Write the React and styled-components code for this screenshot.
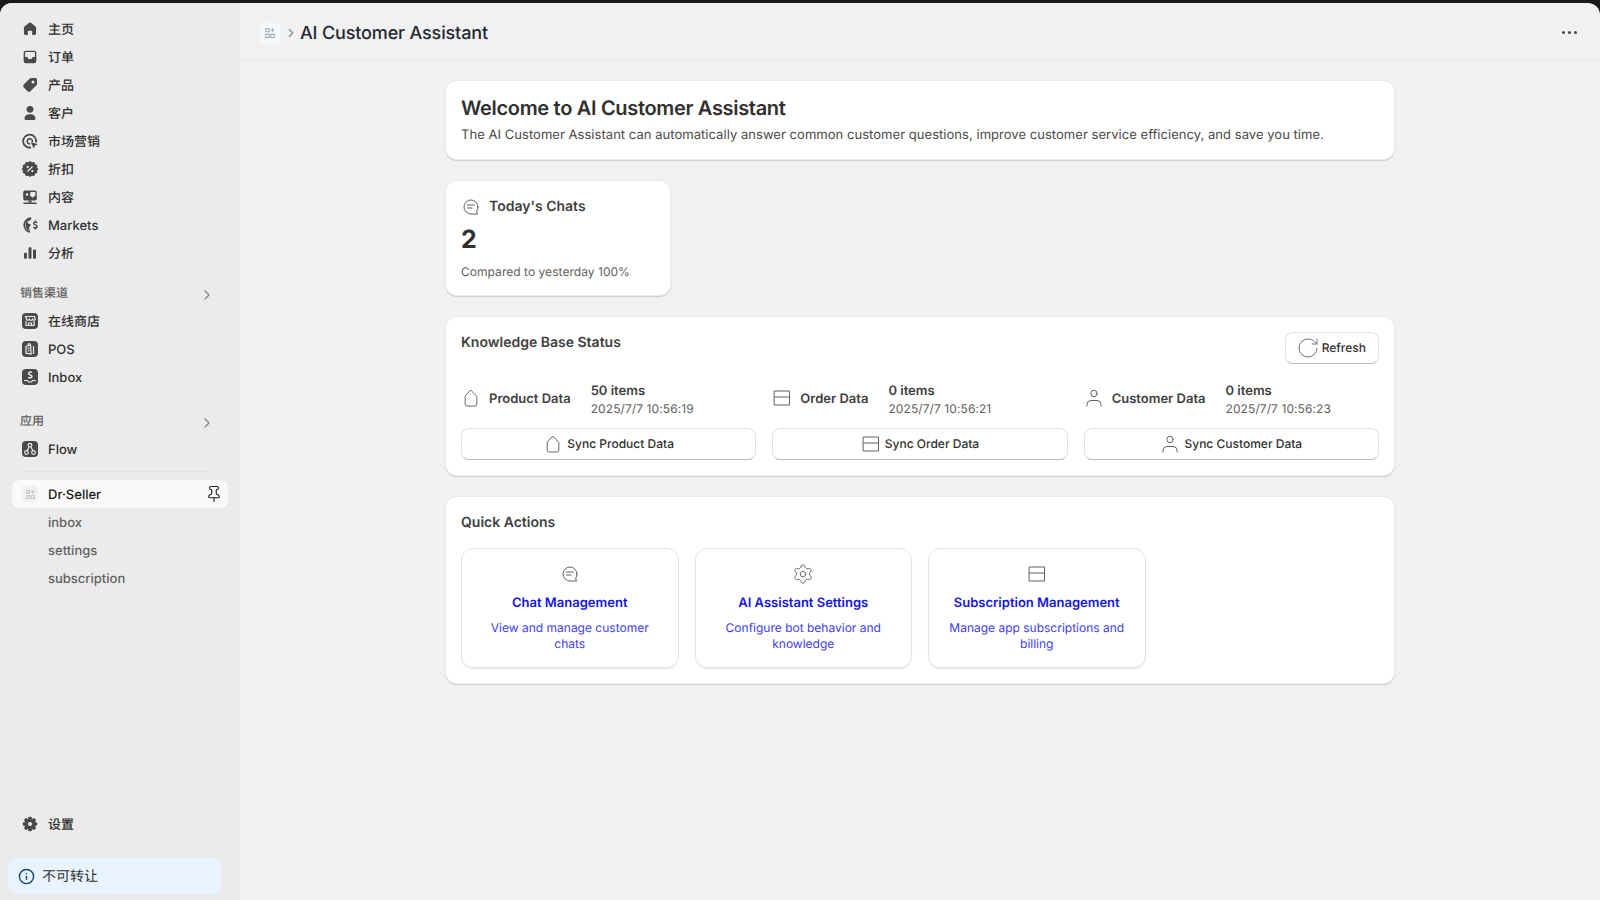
import React from 'react'
import styled, { createGlobalStyle } from 'styled-components'
import { ChevronRight, Pin, RotateCw, Settings as GearOutline, Info } from 'lucide-react'

const GlobalStyle = createGlobalStyle`
  html, body, #root {
    margin: 0;
    height: 100%;
    overflow: hidden;
  }
  body {
    font-family: Inter, "Noto Sans CJK SC", sans-serif;
    font-size: 13px;
    color: #303030;
    background: #1a1a1a;
    text-rendering: geometricPrecision;
  }
  * { box-sizing: border-box; }
`

const Shell = styled.div`
  height: 100vh;
  padding-top: 3px;
  background: #1a1a1a;
`
const Frame = styled.div`
  height: 897px;
  display: grid;
  grid-template-columns: 240px 1fr;
  border-radius: 12px 12px 0 0;
  overflow: hidden;
  background: #f1f1f1;
`
const Sidebar = styled.aside`
  display: flex;
  flex-direction: column;
  background: #ebebeb;
`
const Nav = styled.nav`
  flex: 1;
  padding: 12px 12px 0;
  display: flex;
  flex-direction: column;
`
const NavRow = styled.div`
  height: 28px;
  flex: none;
  display: flex;
  align-items: center;
  gap: 8px;
  padding: 0 8px;
  border-radius: 8px;
  font-size: 13px;
  font-weight: ${p => (p.$active ? 550 : 450)};
  color: ${p => (p.$active ? '#1a1a1a' : '#303030')};
  background: ${p => (p.$active ? '#fafafa' : 'transparent')};
  svg { flex: none; }
`
const NavLabel = styled.span`
  margin-top: ${p => (p.$cjk ? -1 : 2)}px;
`
const SubRow = styled.div`
  height: 28px;
  flex: none;
  display: flex;
  align-items: center;
  padding: 2px 0 0 36px;
  font-size: 13px;
  font-weight: 450;
  color: #616161;
`
const SectionRow = styled.div`
  height: 28px;
  flex: none;
  margin-top: ${p => p.$gap}px;
  display: flex;
  align-items: center;
  justify-content: space-between;
  padding: 0 13px 0 8px;
  font-size: 12px;
  font-weight: 550;
  color: #616161;
  span { margin-top: -1px; }
  svg { margin-top: 4px; }
`
const Divider = styled.div`
  height: 1px;
  flex: none;
  margin: 8px 19px 8px 8px;
  background: #e1e1e1;
`
const PinSlot = styled.span`
  margin-left: auto;
  margin-right: -3px;
  display: flex;
  color: #1f1f1f;
`
const SettingsRow = styled(NavRow)`
  margin-top: auto;
`
const Notice = styled.div`
  height: 36px;
  flex: none;
  margin: 20px 19px 6px 8px;
  padding: 0 10px;
  display: flex;
  align-items: center;
  gap: 7px;
  border-radius: 8px;
  background: #e8f3fd;
  font-size: 14px;
  color: #303030;
  svg { color: #0b4a6f; flex: none; }
`
const Main = styled.main`
  display: flex;
  flex-direction: column;
  min-width: 0;
`
const TopBar = styled.header`
  height: 57px;
  flex: none;
  display: flex;
  align-items: center;
  padding: 3px 20px 0;
  border-bottom: 1px solid #e8e8e8;
`
const AppTile = styled.span`
  width: ${p => p.$size}px;
  height: ${p => p.$size}px;
  margin: ${p => (20 - p.$size) / 2}px;
  flex: none;
  display: flex;
  align-items: center;
  justify-content: center;
  border-radius: 4px;
  background: ${p => p.$bg};
`
const TitleChevron = styled.span`
  display: flex;
  margin: 0 2px 0 4px;
  color: #8a8a8a;
`
const PageTitle = styled.h1`
  margin: 2px 0 0;
  font-size: 18px;
  font-weight: 550;
  letter-spacing: -0.15px;
  color: #1f2933;
`
const MoreDots = styled.div`
  margin-left: auto;
  margin-right: 3px;
  display: flex;
  gap: 2.6px;
  i {
    width: 3.4px;
    height: 3.4px;
    border-radius: 50%;
    background: #4a4a4a;
  }
`
const Content = styled.div`
  width: 950px;
  margin: 20px auto 0;
  display: flex;
  flex-direction: column;
  gap: 20px;
`
const Card = styled.section`
  background: #fff;
  border-radius: 12px;
  padding: 16px;
  box-shadow: inset 0 0 0 1px rgba(0, 0, 0, 0.08), 0 1px 1px rgba(0, 0, 0, 0.16);
`
const WelcomeCard = styled(Card)`
  padding-bottom: 15px;
`
const WelcomeTitle = styled.h2`
  margin: 0;
  font-size: 20px;
  line-height: 24px;
  font-weight: 600;
  letter-spacing: -0.32px;
  color: #303030;
`
const WelcomeText = styled.p`
  margin: 5px 0 0;
  font-size: 13px;
  line-height: 20px;
  letter-spacing: 0.04px;
  color: #4a4a4a;
`
const StatCard = styled(Card)`
  width: 226px;
  height: 116px;
  padding-top: 16.5px;
`
const StatHead = styled.div`
  display: flex;
  align-items: center;
  gap: 8px;
  font-size: 14px;
  line-height: 20px;
  font-weight: 600;
  color: #404040;
`
const StatNumber = styled.div`
  margin-top: 5px;
  font-size: 25px;
  line-height: 36px;
  font-weight: 700;
  color: #303030;
`
const StatNote = styled.div`
  margin-top: 4px;
  font-size: 12px;
  line-height: 20px;
  letter-spacing: 0.04px;
  color: #616161;
`
const CardHead = styled.div`
  display: flex;
  justify-content: space-between;
  align-items: flex-start;
`
const CardTitle = styled.h3`
  margin: 0;
  padding-top: 1px;
  font-size: 14px;
  line-height: 19px;
  font-weight: 600;
  color: #404040;
`
const BaseButton = styled.button`
  height: 32px;
  display: flex;
  align-items: center;
  justify-content: center;
  gap: 4px;
  padding: 0 12px;
  background: #fff;
  border: 1px solid #e3e3e3;
  border-bottom-color: #bdbdbd;
  border-radius: 8px;
  font-family: inherit;
  font-size: 12px;
  font-weight: 500;
  color: #303030;
  text-rendering: inherit;
  svg { flex: none; }
`
const ButtonLabel = styled.span`
  margin-top: -2px;
`
const RefreshGlyph = styled(RotateCw)`
  margin: 0 -2px;
`
const SourceGrid = styled.div`
  margin-top: 16px;
  display: grid;
  grid-template-columns: repeat(3, 1fr);
  column-gap: 16px;
`
const SourceColumn = styled.div`
  display: flex;
  flex-direction: column;
  gap: 12px;
`
const SourceInfo = styled.div`
  height: 36px;
  display: flex;
  align-items: center;
  gap: 8px;
  font-size: 13px;
  font-weight: 600;
  color: #404040;
`
const SourceLabel = styled.span`
  margin-top: 2px;
`
const SourceMeta = styled.div`
  margin: 3px 0 0 12px;
  font-size: 13px;
  font-weight: 600;
  line-height: 17px;
  small {
    display: block;
    font-size: 12px;
    font-weight: 400;
    letter-spacing: 0.09px;
    color: #616161;
  }
`
const ActionGrid = styled.div`
  margin-top: 16px;
  display: grid;
  grid-template-columns: repeat(4, 1fr);
  gap: 16px;
`
const ActionTile = styled.a`
  height: 120px;
  padding: 15px 16px;
  display: flex;
  flex-direction: column;
  align-items: center;
  text-align: center;
  border-radius: 12px;
  border: 1px solid #e3e3e3;
  box-shadow: 0 1px 1px rgba(0, 0, 0, 0.1);
`
const ActionIcon = styled.span`
  height: 20px;
  display: flex;
  align-items: center;
  justify-content: center;
`
const ActionTitle = styled.div`
  margin-top: 9px;
  font-size: 13px;
  line-height: 20px;
  font-weight: 600;
  color: #1414e6;
`
const ActionText = styled.div`
  margin-top: 7px;
  font-size: 12px;
  line-height: 16px;
  color: #4040f0;
`

const dark = '#4a4a4a'

const Ico = ({ children, pad = 0 }) => (
  <svg width="20" height="20" viewBox={`${-pad} ${-pad} ${20 + 2 * pad} ${20 + 2 * pad}`} fill={dark} fillRule="evenodd">{children}</svg>
)

const HomeIcon = () => (
  <Ico pad={1.5}><path d="M11 2.9a1.6 1.6 0 0 0-2 0L3.6 7a1.6 1.6 0 0 0-.6 1.3v7A1.7 1.7 0 0 0 4.7 17h2.8v-4a1 1 0 0 1 1-1h3a1 1 0 0 1 1 1v4h2.8a1.7 1.7 0 0 0 1.7-1.7v-7a1.6 1.6 0 0 0-.6-1.3z" /></Ico>
)
const InboxIcon = () => (
  <Ico pad={1}><path d="M5.5 3h9A2.5 2.5 0 0 1 17 5.5v9a2.5 2.5 0 0 1-2.5 2.5h-9A2.5 2.5 0 0 1 3 14.5v-9A2.5 2.5 0 0 1 5.5 3zM4.6 5.5V10h2.6l1 2.2h3.6l1-2.2h2.6V5.5a.9.9 0 0 0-.9-.9h-9a.9.9 0 0 0-.9.9z" /></Ico>
)
const TagIcon = () => (
  <Ico><path d="M11.2 3h4.3A1.5 1.5 0 0 1 17 4.5v4.3a2 2 0 0 1-.6 1.4l-6 6a2 2 0 0 1-2.8 0l-3.8-3.8a2 2 0 0 1 0-2.8l6-6a2 2 0 0 1 1.4-.6zM13 5.5a1.5 1.5 0 1 0 0 3 1.5 1.5 0 0 0 0-3z" /></Ico>
)
const PersonIcon = () => (
  <Ico>
    <circle cx="10" cy="6.3" r="3.4" />
    <path d="M4.5 15.5c0-2.8 2.4-4.3 5.5-4.3s5.5 1.5 5.5 4.3a1.5 1.5 0 0 1-1.5 1.5H6a1.5 1.5 0 0 1-1.5-1.5z" />
  </Ico>
)
const TargetIcon = () => (
  <Ico>
    <path fill="none" stroke={dark} strokeWidth="1.8" d="M16 11.5a6.5 6.5 0 1 0-5 5" />
    <path fill="none" stroke={dark} strokeWidth="1.6" d="M12.3 11a2.6 2.6 0 1 0-2 1.8" />
    <path d="M10.8 11l7 2.3-2.8 1.2-1.2 2.9z" />
  </Ico>
)
const DiscountIcon = () => (
  <Ico>
    <path d="M10 2l1.9 1.3 2.3-.2 1 2.1 2.1 1-.2 2.3L18.4 10l-1.3 1.5.2 2.3-2.1 1-1 2.1-2.3-.2L10 18l-1.9-1.3-2.3.2-1-2.1-2.1-1 .2-2.3L1.6 10l1.3-1.5-.2-2.3 2.1-1 1-2.1 2.3.2z" />
    <path fill="none" stroke="#ebebeb" strokeWidth="1.3" d="M12.5 7.5l-5 5" />
    <circle cx="7.7" cy="7.9" r="1.1" fill="#ebebeb" />
    <circle cx="12.3" cy="12.1" r="1.1" fill="#ebebeb" />
  </Ico>
)
const ContentIcon = () => (
  <Ico>
    <path d="M5 3.5h10a1.8 1.8 0 0 1 1.8 1.8v6.4a1.8 1.8 0 0 1-1.8 1.8H5a1.8 1.8 0 0 1-1.8-1.8V5.3A1.8 1.8 0 0 1 5 3.5zM7 6.2a1.3 1.3 0 1 0 0 2.6 1.3 1.3 0 0 0 0-2.6zM10 8.5l2.5 2.3 3-2.3V5.5a.6.6 0 0 0-.6-.6h-4.4z" />
    <rect x="3.2" y="15.5" width="13.6" height="1.5" rx=".7" />
    <rect x="8.5" y="13.5" width="3" height="2" />
  </Ico>
)
const MarketsIcon = () => (
  <Ico>
    <path d="M10 3a7 7 0 0 1 1.7.2L10 5.5 7.5 6 8 8.5l3 1-2 3 .8 3.5A7 7 0 0 1 10 3z" />
    <path fill="none" stroke={dark} strokeWidth="1.6" d="M11 3.1A7 7 0 0 0 10 17" />
    <path fill="none" stroke={dark} strokeWidth="1.5" d="M17 7.8c-.6-.9-3.2-1.2-3.3.5-.1 1.9 3.5 1.2 3.5 3.3 0 1.7-2.8 1.5-3.8.5M15.5 5.5v1M15.5 13v1.5" />
  </Ico>
)
const BarsIcon = () => (
  <Ico>
    <rect x="4" y="9.8" width="3" height="6" rx="1" />
    <rect x="8.5" y="4.3" width="3" height="11.5" rx="1" />
    <rect x="13" y="6.5" width="3" height="9.3" rx="1" />
  </Ico>
)
const teeth = [0, 45, 90, 135, 180, 225, 270, 315]
const CogIcon = () => (
  <Ico>
    {teeth.map(a => <rect key={a} x="8.2" y="2.8" width="3.6" height="4" rx="1" transform={`rotate(${a} 10 10)`} />)}
    <circle cx="10" cy="10" r="5.5" />
    <circle cx="10" cy="10" r="2" fill="#ebebeb" />
  </Ico>
)
const Tile = ({ children }) => (
  <Ico>
    <rect x="2" y="2" width="16" height="16" rx="4" />
    <g fill="none" stroke="#ebebeb" strokeWidth="1.2">{children}</g>
  </Ico>
)
const StoreTile = () => (
  <Tile>
    <path d="M5.5 5.5h9l.8 2.8c0 1-2 1.3-2.6 0-.5 1.3-2.9 1.3-3.4 0-.6 1.3-2.8 1-2.6 0z" />
    <path d="M6 10v4.5h8V10M8.5 14.5V12h3v2.5" />
  </Tile>
)
const PosTile = () => (
  <Tile>
    <path d="M6 7.5L10.5 6l.7 9-5.200-.8zM8 6.500c0-2.500 2-2.500 2.500-.5" />
    <path d="M13.5 7v8" />
    <path strokeWidth="1" d="M9.5 9c-1-.5-2 .2-1.3 1 .6.7 1.5.8 1 1.7-.3.5-1 .5-1.500.2" />
  </Tile>
)
const ChannelInboxTile = () => (
  <Tile>
    <path d="M4 13.5h3.500l1 1.500h3l1-1.500H16" />
    <path strokeWidth="1.4" d="M12 5.500c-1.300-.8-3.500-.5-3.500 1 0 1.800 3.500 1.200 3.500 3 0 1.400-2.300 1.600-3.800.8" />
  </Tile>
)
const FlowTile = () => (
  <Tile>
    <circle cx="10" cy="6.2" r="1.8" />
    <circle cx="6.5" cy="13.5" r="1.8" />
    <circle cx="13.5" cy="13.5" r="1.8" />
    <path d="M9 8l-1.800 3.800M11 8l1.800 3.800" />
  </Tile>
)

const AppGlyph = ({ color, size }) => (
  <svg width={size} height={size} viewBox="2 2 12 12" fill="none" stroke={color} strokeWidth="1.3">
    <rect x="3" y="2.5" width="4" height="4" />
    <rect x="3" y="9.5" width="4" height="4" />
    <rect x="9" y="9.5" width="4" height="4" />
    <path d="M11 2.500v4M9 4.500h4" />
  </svg>
)

const Outline = ({ children, color = '#616161' }) => (
  <svg width="20" height="20" viewBox="0 0 20 20" fill="none" stroke={color} strokeWidth="1" strokeLinejoin="round" strokeLinecap="round">{children}</svg>
)
const ProductGlyph = () => (
  <Outline><path d="M10 2.300l6.500 6.200v7.500a2 2 0 0 1-2 2h-9a2 2 0 0 1-2-2V8.500z" transform="translate(1 0) scale(.9 1)" /></Outline>
)
const OrderGlyph = () => (
  <Outline><rect x="2.5" y="3" width="15" height="14" /><path d="M2.500 9h15" /></Outline>
)
const CustomerGlyph = () => (
  <Outline><circle cx="10" cy="5.5" r="3.2" /><path d="M3 18v-1.500a4 4 0 0 1 4-4h6a4 4 0 0 1 4 4V18" /></Outline>
)
const ChatGlyph = () => (
  <Outline>
    <path d="M17 10a7 7 0 1 0-7 7h6.500l-.9-2.700A7 7 0 0 0 17 10z" />
    <path d="M6.500 8h7M6.500 11h4.500" />
  </Outline>
)

const mainNav = [
  ['主页', HomeIcon, true],
  ['订单', InboxIcon, true],
  ['产品', TagIcon, true],
  ['客户', PersonIcon, true],
  ['市场营销', TargetIcon, true],
  ['折扣', DiscountIcon, true],
  ['内容', ContentIcon, true],
  ['Markets', MarketsIcon, false],
  ['分析', BarsIcon, true],
]
const channels = [
  ['在线商店', StoreTile, true],
  ['POS', PosTile, false],
  ['Inbox', ChannelInboxTile, false],
]
const sources = [
  { label: 'Product Data', count: '50 items', time: '2025/7/7 10:56:19', action: 'Sync Product Data', Icon: ProductGlyph },
  { label: 'Order Data', count: '0 items', time: '2025/7/7 10:56:21', action: 'Sync Order Data', Icon: OrderGlyph },
  { label: 'Customer Data', count: '0 items', time: '2025/7/7 10:56:23', action: 'Sync Customer Data', Icon: CustomerGlyph },
]
const actions = [
  { title: 'Chat Management', text: 'View and manage customer chats', icon: <ChatGlyph /> },
  { title: 'AI Assistant Settings', text: 'Configure bot behavior and knowledge', icon: <GearOutline size={22} strokeWidth={1} color="#616161" /> },
  { title: 'Subscription Management', text: 'Manage app subscriptions and billing', icon: <OrderGlyph /> },
]

export default function App() {
  return (
    <Shell>
      <GlobalStyle />
      <Frame>
        <Sidebar>
          <Nav>
            {mainNav.map(([label, Icon, cjk]) => (
              <NavRow key={label}><Icon /><NavLabel $cjk={cjk}>{label}</NavLabel></NavRow>
            ))}
            <SectionRow $gap={12}><span>销售渠道</span><ChevronRight size={16} color="#8a8a8a" /></SectionRow>
            {channels.map(([label, Icon, cjk]) => (
              <NavRow key={label}><Icon /><NavLabel $cjk={cjk}>{label}</NavLabel></NavRow>
            ))}
            <SectionRow $gap={16}><span>应用</span><ChevronRight size={16} color="#8a8a8a" /></SectionRow>
            <NavRow><FlowTile /><NavLabel>Flow</NavLabel></NavRow>
            <Divider />
            <NavRow $active>
              <AppTile $bg="#f1f1f1" $size={16}><AppGlyph color="#c0c0c0" size={9} /></AppTile>
              <NavLabel>Dr·Seller</NavLabel>
              <PinSlot><Pin size={18} strokeWidth={1.5} /></PinSlot>
            </NavRow>
            <SubRow>inbox</SubRow>
            <SubRow>settings</SubRow>
            <SubRow>subscription</SubRow>
            <SettingsRow><CogIcon /><NavLabel $cjk>设置</NavLabel></SettingsRow>
          </Nav>
          <Notice><Info size={17} strokeWidth={2} /><NavLabel $cjk>不可转让</NavLabel></Notice>
        </Sidebar>
        <Main>
          <TopBar>
            <AppTile $bg="#f6f7f8" $size={20}><AppGlyph color="#a0aab5" size={10} /></AppTile>
            <TitleChevron><ChevronRight size={14} /></TitleChevron>
            <PageTitle>AI Customer Assistant</PageTitle>
            <MoreDots><i /><i /><i /></MoreDots>
          </TopBar>
          <Content>
            <WelcomeCard>
              <WelcomeTitle>Welcome to AI Customer Assistant</WelcomeTitle>
              <WelcomeText>The AI Customer Assistant can automatically answer common customer questions, improve customer service efficiency, and save you time.</WelcomeText>
            </WelcomeCard>
            <StatCard>
              <StatHead><ChatGlyph />Today's Chats</StatHead>
              <StatNumber>2</StatNumber>
              <StatNote>Compared to yesterday 100%</StatNote>
            </StatCard>
            <Card>
              <CardHead>
                <CardTitle>Knowledge Base Status</CardTitle>
                <BaseButton><RefreshGlyph size={24} strokeWidth={1} color="#6b7280" /><ButtonLabel>Refresh</ButtonLabel></BaseButton>
              </CardHead>
              <SourceGrid>
                {sources.map(({ label, count, time, action, Icon }) => (
                  <SourceColumn key={label}>
                    <SourceInfo>
                      <Icon />
                      <SourceLabel>{label}</SourceLabel>
                      <SourceMeta>{count}<small>{time}</small></SourceMeta>
                    </SourceInfo>
                    <BaseButton><Icon /><ButtonLabel>{action}</ButtonLabel></BaseButton>
                  </SourceColumn>
                ))}
              </SourceGrid>
            </Card>
            <Card>
              <CardTitle>Quick Actions</CardTitle>
              <ActionGrid>
                {actions.map(({ title, text, icon }) => (
                  <ActionTile key={title}>
                    <ActionIcon>{icon}</ActionIcon>
                    <ActionTitle>{title}</ActionTitle>
                    <ActionText>{text}</ActionText>
                  </ActionTile>
                ))}
              </ActionGrid>
            </Card>
          </Content>
        </Main>
      </Frame>
    </Shell>
  )
}
